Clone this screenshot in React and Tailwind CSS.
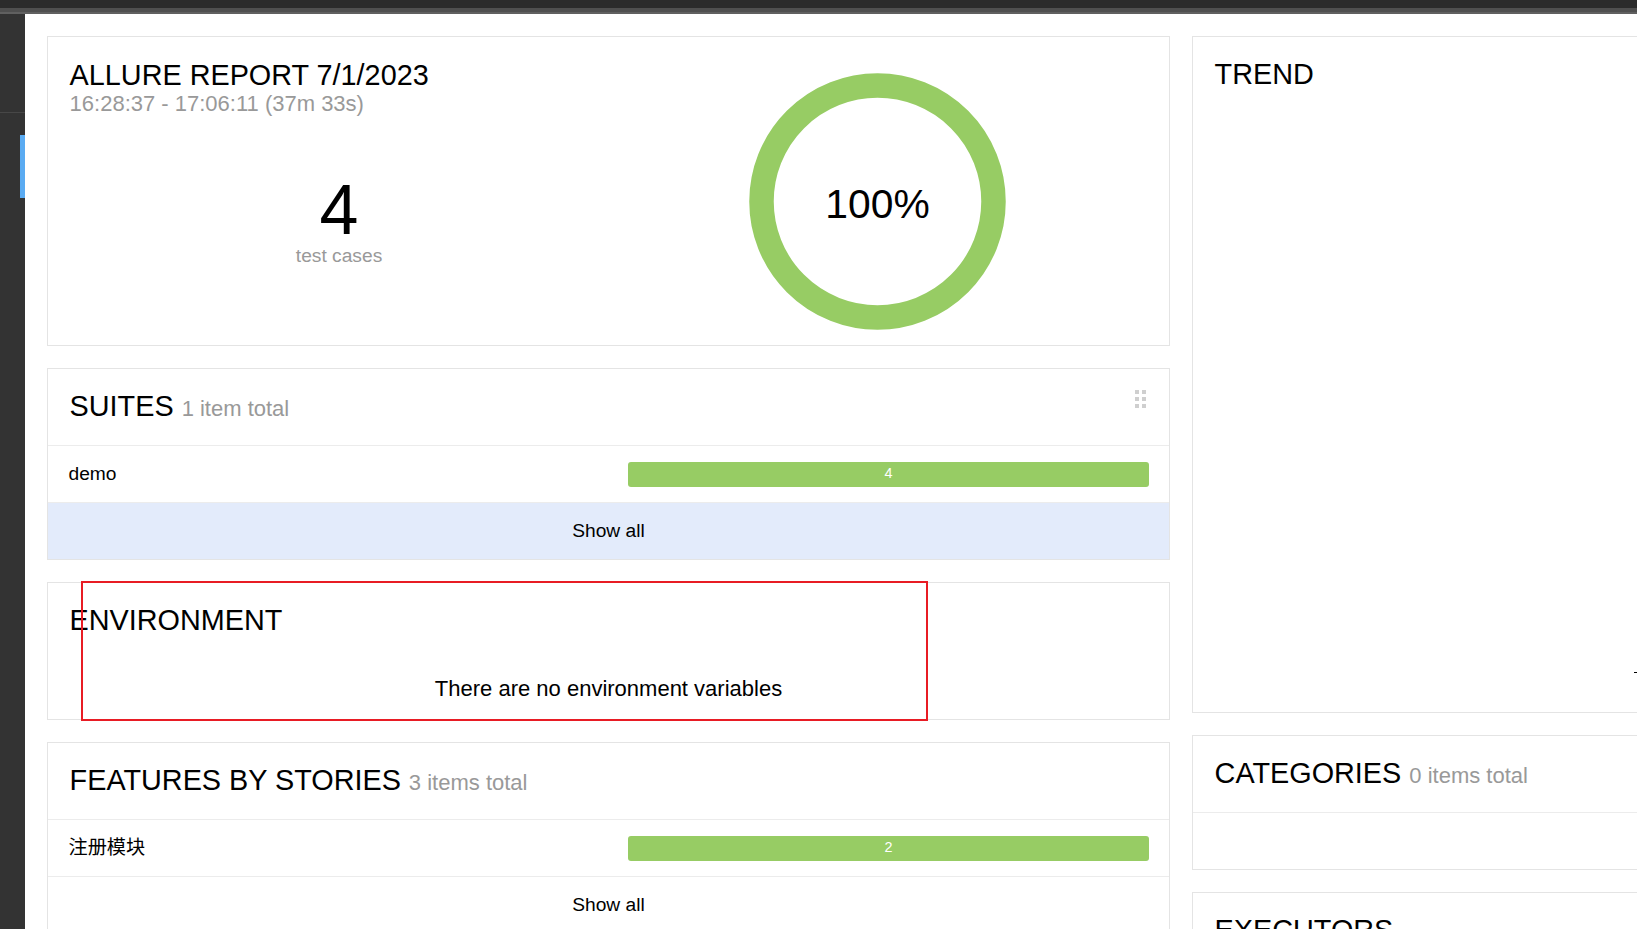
import React from "react";

const font = "font-['Liberation_Sans','Noto_Sans_CJK_SC',Arial,sans-serif]";

function DragIcon() {
  return (
    <div className="grid grid-cols-[4px_4px] gap-x-[3px] gap-y-[3px] mr-[3px]">
      {[0, 1, 2, 3, 4, 5].map((i) => (
        <div key={i} className="w-[4px] h-[4px] bg-[#cfcfcf]" />
      ))}
    </div>
  );
}

function Header({ title, sub, drag }) {
  return (
    <div className="h-[77px] shrink-0 border-b border-[#ececec] pt-[21px] pl-[21.6px] pr-[20px] flex justify-between items-start">
      <h2 className="text-[28.8px] leading-[1.15] text-black font-normal">
        {title}
        {sub ? " " : ""}
        {sub ? <span className="text-[22px] text-[#999]">{sub}</span> : null}
      </h2>
      {drag ? <DragIcon /> : null}
    </div>
  );
}

function Row({ name, value }) {
  return (
    <div className="h-[57px] shrink-0 border-b border-[#ececec] flex items-center pl-[20.5px] pr-[20px]">
      <div className="flex-1 text-[19.2px] text-black">{name}</div>
      <div className="w-[521px] h-[25px] rounded-[3px] bg-[#97cc64] flex items-center justify-center text-white text-[14.4px]">
        {value}
      </div>
    </div>
  );
}

export default function App() {
  return (
    <div className={`relative w-[1637px] h-[929px] overflow-hidden bg-white flex flex-col ${font}`}>
      <div className="shrink-0 flex flex-col">
        <div className="h-[8px] bg-[#2b2b2b]" />
        <div className="h-[4px] bg-[#4f4f4f]" />
        <div className="h-[2px] bg-[#606060]" />
      </div>
      <div className="flex flex-1 min-h-0">
        <div className="w-[25px] shrink-0 bg-[#333333] flex flex-col">
          <div className="h-[99px] shrink-0 border-b border-[#474747]" />
          <div className="mt-[22px] self-end w-[5px] h-[63px] shrink-0 bg-[#5aabf2]" />
        </div>
        <div className="flex-1 min-w-0 overflow-hidden pl-[22px] pt-[22px] flex items-start gap-[22px]">
          {/* left column */}
          <div className="w-[1123px] shrink-0 flex flex-col gap-[22px]">
            <div className="h-[310px] shrink-0 border border-[#e4e4e4] grid grid-cols-2 px-[21.6px]">
              <div className="pt-[21.6px] flex flex-col">
                <h1 className="text-[28.8px] leading-[1.15] text-black font-normal">ALLURE REPORT 7/1/2023</h1>
                <div className="text-[22px] leading-[1.13] text-[#999]">16:28:37 - 17:06:11 (37m 33s)</div>
                <div className="mt-[58.7px] flex flex-col items-center">
                  <div className="text-[70px] leading-none text-black">4</div>
                  <div className="text-[19.2px] leading-[1.15] text-[#999]">test cases</div>
                </div>
              </div>
              <div className="pt-[36px] flex justify-center items-start">
                <svg width="257" height="257" viewBox="0 0 257 257">
                  <circle cx="128.5" cy="128.5" r="116" fill="none" stroke="#97cc64" strokeWidth="24.5" />
                  <text
                    x="128.5"
                    y="145"
                    textAnchor="middle"
                    fontSize="40.8"
                    fontFamily="'Liberation Sans', Arial, sans-serif"
                    fill="#000"
                  >
                    100%
                  </text>
                </svg>
              </div>
            </div>

            <div className="shrink-0 border border-[#e4e4e4] flex flex-col">
              <Header title="SUITES" sub="1 item total" drag />
              <Row name="demo" value="4" />
              <div className="h-[56px] shrink-0 bg-[#e3ebfb] flex items-center justify-center text-[19.2px] text-black">
                Show all
              </div>
            </div>

            <div className="h-[138px] shrink-0 border border-[#e4e4e4] flex flex-col">
              <div className="pt-[21px] pl-[21.6px]">
                <h2 className="text-[28.8px] leading-[1.15] text-black font-normal">ENVIRONMENT</h2>
              </div>
              <div className="mt-[39.3px] text-center text-[22px] leading-[1.15] text-black">
                There are no environment variables
              </div>
            </div>

            <div className="shrink-0 border border-[#e4e4e4] flex flex-col">
              <Header title="FEATURES BY STORIES" sub="3 items total" />
              <Row name="注册模块" value="2" />
              <div className="h-[56px] shrink-0 flex items-center justify-center text-[19.2px] text-black">Show all</div>
            </div>
          </div>

          {/* right column */}
          <div className="w-[1123px] shrink-0 flex flex-col gap-[22px]">
            <div className="relative h-[677px] shrink-0 border border-[#e4e4e4]">
              <div className="pt-[21px] pl-[21.6px]">
                <h2 className="text-[28.8px] leading-[1.15] text-black font-normal">TREND</h2>
              </div>
              <div className="absolute left-[441px] top-[635px] w-[4px] h-[1px] bg-black" />
            </div>
            <div className="h-[135px] shrink-0 border border-[#e4e4e4] flex flex-col">
              <Header title="CATEGORIES" sub="0 items total" />
            </div>
            <div className="h-[200px] shrink-0 border border-[#e4e4e4]">
              <div className="pt-[21px] pl-[21.6px]">
                <h2 className="text-[28.8px] leading-[1.15] text-black font-normal">EXECUTORS</h2>
              </div>
            </div>
          </div>
        </div>
      </div>

      <div className="absolute left-[81px] top-[581px] w-[847px] h-[140px] border-2 border-[#e81c24] pointer-events-none" />
    </div>
  );
}
